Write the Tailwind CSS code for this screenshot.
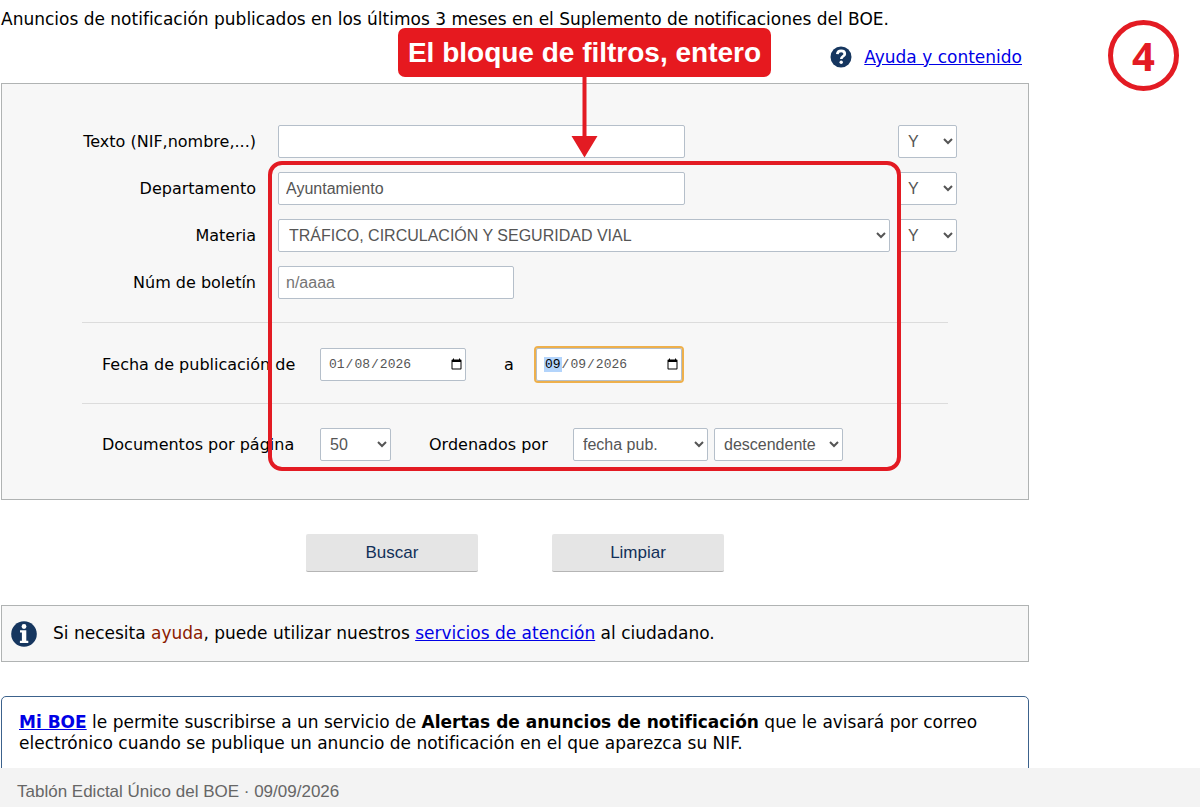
<!DOCTYPE html>
<html lang="es">
<head>
    <meta charset="UTF-8">
    <meta name="viewport" content="width=device-width, initial-scale=1.0">
    <title>Tablón Edictal Único del BOE</title>
    <script src="https://cdn.jsdelivr.net/npm/@tailwindcss/browser@4"></script>
</head>
<body class="relative flex h-screen flex-col overflow-hidden bg-white font-['DejaVu_Sans',sans-serif] text-[17px] leading-[21px] text-black">
    <main class="min-h-0 w-full max-w-[1029px] flex-1 overflow-hidden pl-px pt-[9px]">
        <p>Anuncios de notificación publicados en los últimos 3 meses en el Suplemento de notificaciones del BOE.</p>

        <div class="mt-4 flex items-center justify-end gap-3 pr-[7px]">
            <svg class="size-[22px]" viewBox="0 0 22 22" aria-hidden="true">
                <circle cx="11" cy="11" r="10.5" fill="#16365f"/>
                <path d="M7.3 8.2C7.6 5.9 9 4.9 11.1 4.9C13.3 4.9 14.8 6.1 14.8 8C14.8 10.2 11.3 10.4 11.3 12.9" fill="none" stroke="#fff" stroke-width="2.7"/>
                <circle cx="11.2" cy="16.3" r="1.7" fill="#fff"/>
            </svg>
            <a href="#" class="text-[#0000e6] underline">Ayuda y contenido</a>
        </div>

        <form>
            <div class="mt-[15px] border border-[#b0b3b3] bg-[#f7f7f7] pb-[38px] pt-[41px] text-base leading-5">
                <!-- Text filters -->
                <div class="flex flex-col gap-3.5 pr-[71px]">
                    <div class="flex items-center">
                        <label for="texto" class="w-[276px] shrink-0 pr-[22px] text-right">Texto (NIF,nombre,...)</label>
                        <div class="flex-1"><input type="text" id="texto" class="block h-[33px] w-[407px] rounded-xs border border-[#b5bfca] bg-white px-[7px] font-['Liberation_Sans',sans-serif] text-[#555]"></div>
                        <select aria-label="Operador texto" class="h-[33px] w-[59px] rounded-xs border border-[#b5bfca] bg-white pl-[5px] font-['Liberation_Sans',sans-serif] text-[#555]"><option>Y</option><option>O</option></select>
                    </div>
                    <div class="flex items-center">
                        <label for="departamento" class="w-[276px] shrink-0 pr-[22px] text-right">Departamento</label>
                        <div class="flex-1"><input type="text" id="departamento" value="Ayuntamiento" class="block h-[33px] w-[407px] rounded-xs border border-[#b5bfca] bg-white px-[7px] font-['Liberation_Sans',sans-serif] text-[#555]"></div>
                        <select aria-label="Operador departamento" class="h-[33px] w-[59px] rounded-xs border border-[#b5bfca] bg-white pl-[5px] font-['Liberation_Sans',sans-serif] text-[#555]"><option>Y</option><option>O</option></select>
                    </div>
                    <div class="flex items-center">
                        <label for="materia" class="w-[276px] shrink-0 pr-[22px] text-right">Materia</label>
                        <div class="flex-1 pr-2"><select id="materia" class="block h-[33px] w-full rounded-xs border border-[#b5bfca] bg-white pl-1.5 font-['Liberation_Sans',sans-serif] text-[#555]"><option>TRÁFICO, CIRCULACIÓN Y SEGURIDAD VIAL</option></select></div>
                        <select aria-label="Operador materia" class="h-[33px] w-[59px] rounded-xs border border-[#b5bfca] bg-white pl-[5px] font-['Liberation_Sans',sans-serif] text-[#555]"><option>Y</option><option>O</option></select>
                    </div>
                    <div class="flex items-center">
                        <label for="boletin" class="w-[276px] shrink-0 pr-[22px] text-right">Núm de boletín</label>
                        <input type="text" id="boletin" placeholder="n/aaaa" class="h-[33px] w-[236px] rounded-xs border border-[#b5bfca] bg-white px-[7px] font-['Liberation_Sans',sans-serif] text-[#555] placeholder:text-[#757575]">
                    </div>
                </div>

                <hr class="mx-20 mt-[23px] border-[#dcdcdc]">

                <!-- Publication dates -->
                <div class="mt-[25px] flex items-center pl-[100px]">
                    <label for="desde" class="w-[218px] shrink-0">Fecha de publicación de</label>
                    <input type="date" id="desde" value="2026-01-08" class="h-[33px] w-[146px] rounded-xs border border-[#b5bfca] bg-white pl-[7px] font-['Liberation_Mono',monospace] text-[13px] text-[#555]">
                    <label for="hasta" class="w-[70px] pl-[38px]">a</label>
                    <input type="date" id="hasta" value="2026-09-09" autofocus class="h-[33px] w-[146px] rounded-xs border border-[#b5bfca] bg-white pl-[7px] font-['Liberation_Mono',monospace] text-[13px] text-[#555] outline-2 outline-[#eeb04c] [&::-webkit-datetime-edit-month-field]:bg-[#b3d4fb]! [&::-webkit-datetime-edit-month-field]:text-black!">
                </div>

                <hr class="mx-20 mt-[22px] border-[#dcdcdc]">

                <!-- Paging and order -->
                <div class="mt-6 flex items-center pl-[100px]">
                    <label for="pagina" class="w-[218px] shrink-0">Documentos por página</label>
                    <select id="pagina" class="h-[33px] w-[71px] rounded-xs border border-[#b5bfca] bg-white pl-[5px] font-['Liberation_Sans',sans-serif] text-[#555]"><option>50</option><option>100</option></select>
                    <label for="orden" class="w-[182px] pl-[38px]">Ordenados por</label>
                    <select id="orden" class="h-[33px] w-[135px] rounded-xs border border-[#b5bfca] bg-white pl-[5px] font-['Liberation_Sans',sans-serif] text-[#555]"><option>fecha pub.</option></select>
                    <select aria-label="Sentido" class="ml-1.5 h-[33px] w-[129px] rounded-xs border border-[#b5bfca] bg-white pl-[5px] font-['Liberation_Sans',sans-serif] text-[#555]"><option>descendente</option><option>ascendente</option></select>
                </div>
            </div>

            <div class="mt-[34px] flex justify-center gap-[74px]">
                <button type="button" class="h-[38px] w-[172px] rounded-xs border-b border-[#b5b5b5] bg-[#e5e5e5] font-['Liberation_Sans',sans-serif] text-[#123059]">Buscar</button>
                <button type="reset" class="h-[38px] w-[172px] rounded-xs border-b border-[#b5b5b5] bg-[#e5e5e5] font-['Liberation_Sans',sans-serif] text-[#123059]">Limpiar</button>
            </div>
        </form>

        <div class="mt-[33px] flex h-[57px] items-center gap-4 border border-[#b0b3b3] bg-[#f7f7f7] pl-[9px]">
            <svg class="size-[26px]" viewBox="0 0 26 26" aria-hidden="true">
                <circle cx="13" cy="13" r="12.8" fill="#16365f"/>
                <circle cx="13" cy="5.5" r="2.4" fill="#fff"/>
                <path d="M9 9.3h6.3v10.4h2v2.3H8.9v-2.3h2v-8.1H9z" fill="#fff"/>
            </svg>
            <p>Si necesita <span class="text-[#8b1a00]">ayuda</span>, puede utilizar nuestros <a href="#" class="text-[#0000e6] underline">servicios de atención</a> al ciudadano.</p>
        </div>

        <div class="mt-[34px] h-40 rounded-[5px] border border-[#3c628c] px-[17px] pt-[15px]">
            <p><a href="#" class="font-bold text-[#0000e6] underline">Mi BOE</a> le permite suscribirse a un servicio de <strong>Alertas de anuncios de notificación</strong> que le avisará por correo electrónico cuando se publique un anuncio de notificación en el que aparezca su NIF.</p>
        </div>
    </main>

    <footer class="flex h-[39px] shrink-0 items-center bg-[#f3f3f3] pl-[17px] pt-2 font-['Liberation_Sans',sans-serif] text-[#666]">Tablón Edictal Único del BOE · 09/09/2026</footer>

    <!-- Step annotations over the form -->
    <div class="pointer-events-none absolute left-[268px] top-[161px] h-[310px] w-[633px] rounded-[14px] border-4 border-[#e31b23]"></div>
    <div class="absolute left-[398px] top-7 flex h-[49px] w-[373px] items-center justify-center whitespace-nowrap rounded-[7px] bg-[#e6191f] font-['Liberation_Sans',sans-serif] text-[28px] font-bold text-white">El bloque de filtros, entero</div>
    <svg class="pointer-events-none absolute left-[571px] top-[76px] h-[82px] w-[27px]" viewBox="0 0 27 82" aria-hidden="true">
        <path d="M11.5 0h4v60h11L13.5 81.5L.5 60h11z" fill="#e31b23"/>
    </svg>
    <div class="absolute right-[21px] top-5 flex size-[71px] items-center justify-center rounded-full border-[5px] border-[#e31b23] bg-white font-['Open_Sans',sans-serif] text-[40px] font-bold text-[#e31b23]">4</div>
</body>
</html>
